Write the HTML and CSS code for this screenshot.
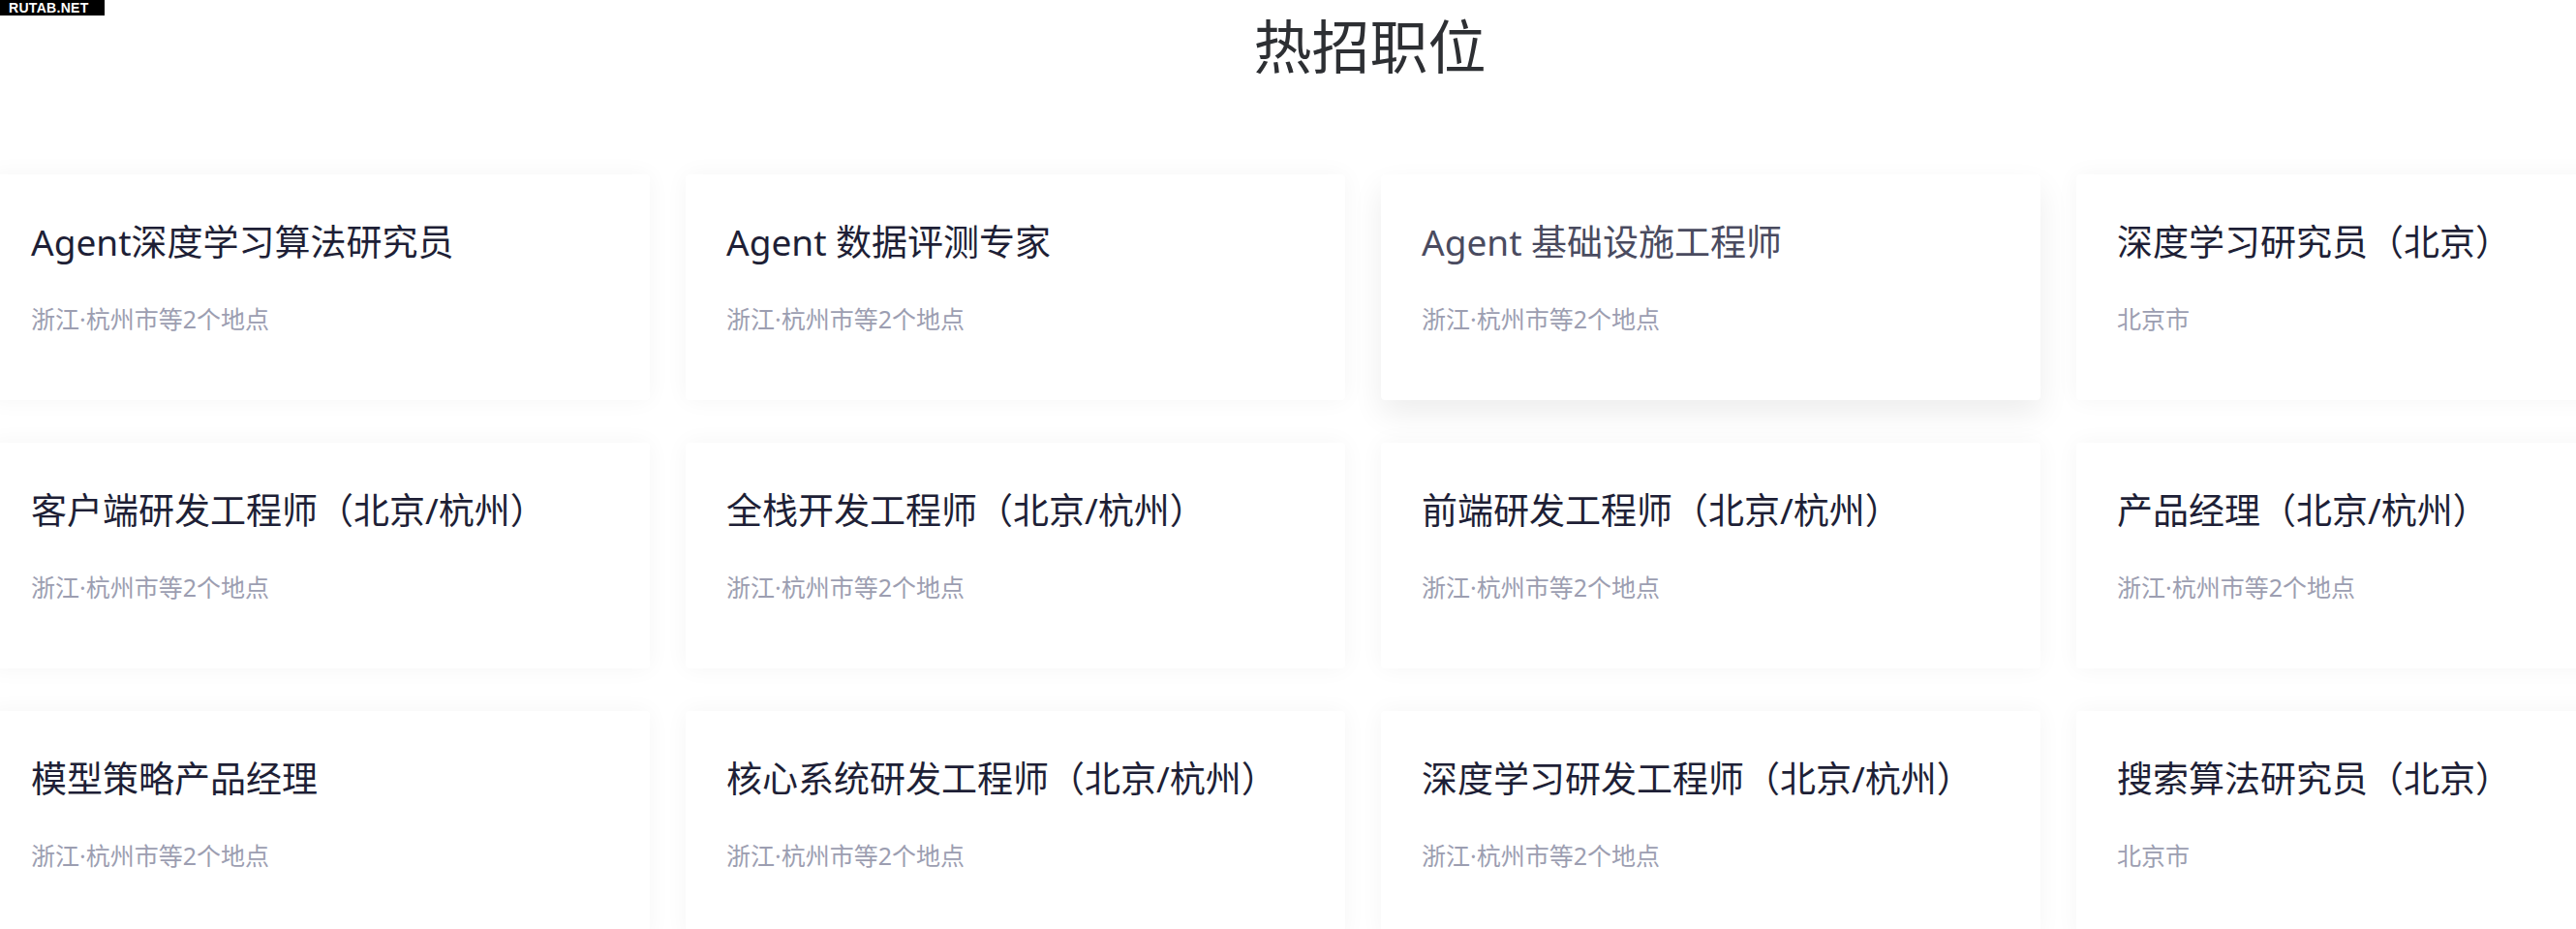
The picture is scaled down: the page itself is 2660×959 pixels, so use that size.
FILE: index.html
```html
<!DOCTYPE html>
<html lang="zh-CN">
<head>
  <meta charset="UTF-8" />
  <title>热招职位</title>
  <link rel="stylesheet" href="styles.css">
</head>
<body>
  <div class="badge">RUTAB.NET</div>

  <section class="jobs">
    <h2 class="jobs-title">热招职位</h2>

    <div class="job-grid">
      <a class="job-card" href="#">
        <div class="job-name">Agent深度学习算法研究员</div>
        <div class="job-place">浙江·杭州市等2个地点</div>
      </a>
      <a class="job-card" href="#">
        <div class="job-name">Agent 数据评测专家</div>
        <div class="job-place">浙江·杭州市等2个地点</div>
      </a>
      <a class="job-card is-hover" href="#">
        <div class="job-name">Agent 基础设施工程师</div>
        <div class="job-place">浙江·杭州市等2个地点</div>
      </a>
      <a class="job-card" href="#">
        <div class="job-name">深度学习研究员（北京）</div>
        <div class="job-place">北京市</div>
      </a>

      <a class="job-card" href="#">
        <div class="job-name">客户端研发工程师（北京/杭州）</div>
        <div class="job-place">浙江·杭州市等2个地点</div>
      </a>
      <a class="job-card" href="#">
        <div class="job-name">全栈开发工程师（北京/杭州）</div>
        <div class="job-place">浙江·杭州市等2个地点</div>
      </a>
      <a class="job-card" href="#">
        <div class="job-name">前端研发工程师（北京/杭州）</div>
        <div class="job-place">浙江·杭州市等2个地点</div>
      </a>
      <a class="job-card" href="#">
        <div class="job-name">产品经理（北京/杭州）</div>
        <div class="job-place">浙江·杭州市等2个地点</div>
      </a>

      <a class="job-card" href="#">
        <div class="job-name">模型策略产品经理</div>
        <div class="job-place">浙江·杭州市等2个地点</div>
      </a>
      <a class="job-card" href="#">
        <div class="job-name">核心系统研发工程师（北京/杭州）</div>
        <div class="job-place">浙江·杭州市等2个地点</div>
      </a>
      <a class="job-card" href="#">
        <div class="job-name">深度学习研发工程师（北京/杭州）</div>
        <div class="job-place">浙江·杭州市等2个地点</div>
      </a>
      <a class="job-card" href="#">
        <div class="job-name">搜索算法研究员（北京）</div>
        <div class="job-place">北京市</div>
      </a>
    </div>
  </section>
</body>
</html>
```

FILE: styles.css
```css
html, body {
  overflow: hidden;
}

body {
  margin: 0;
  background: #fff;
  font-family: "Noto Sans", "Noto Sans CJK SC", sans-serif;
  color: #1e1f36;
}

.badge {
  position: absolute;
  top: 0;
  left: 0;
  width: 108px;
  height: 16px;
  background: #000;
  color: #fff;
  font-family: "Liberation Sans", sans-serif;
  font-weight: bold;
  font-size: 14px;
  line-height: 16px;
  letter-spacing: 0.3px;
  padding-left: 9px;
  box-sizing: border-box;
}

.jobs {
  width: 2835px;
  margin-left: -10px;
}

.jobs-title {
  margin: 18px 0 0;
  padding-left: 14px;
  text-align: center;
  font-size: 60px;
  line-height: 60px;
  font-weight: normal;
  color: #2d2f33;
}

.job-grid {
  margin-top: 102px;
  display: grid;
  grid-template-columns: repeat(4, 681px);
  column-gap: 37px;
  row-gap: 44px;
}

.job-card {
  display: block;
  height: 233px;
  box-sizing: border-box;
  padding: 43px 42px 0;
  background: #fff;
  border-radius: 4px;
  box-shadow: 0 0 24px rgba(0, 0, 0, 0.045);
  text-decoration: none;
  transition: all 0.3s ease;
}

.job-card:hover,
.job-card.is-hover {
  box-shadow: 0 14px 32px rgba(0, 0, 0, 0.075);
}

.job-name {
  font-size: 37px;
  line-height: 54px;
  color: #1e1f36;
}

.job-card:hover .job-name,
.job-card.is-hover .job-name {
  color: #4a4b5f;
}

.job-place {
  margin-top: 34px;
  font-size: 25px;
  line-height: 36px;
  color: #9c9eb1;
}
```
